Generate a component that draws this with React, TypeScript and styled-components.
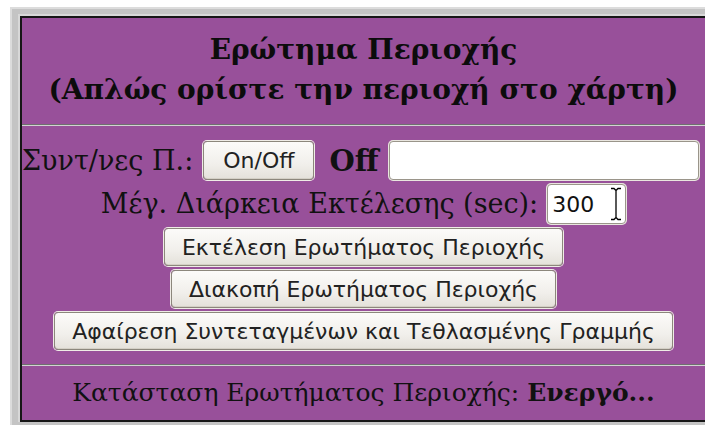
import React from "react";
import styled, { createGlobalStyle } from "styled-components";

const GlobalStyle = createGlobalStyle`
  html, body {
    margin: 0;
    padding: 0;
    background: #ffffff;
    overflow: hidden;
  }
  body {
    font-family: "DejaVu Serif", "Liberation Serif", serif;
    color: #111;
  }
`;

const Page = styled.div`
  padding: 7px 0 0 10px;
`;

/* grey bevelled table border around the panel (right side runs off the edge) */
const Frame = styled.div`
  border-top: 2px solid #dcdcdc;
  border-left: 2px solid #dcdcdc;
  background: #c4c4c4;
  padding: 5px 0 3px 6px;
`;

const FrameInner = styled.div`
  border-top: 2px solid #d8d8d8;
  border-left: 2px solid #d8d8d8;
`;

const Panel = styled.div`
  background: #98509a;
  border: 2px solid #161616;
  border-right: none;
  width: 683px;
  display: flex;
  flex-direction: column;
`;

const Header = styled.h2`
  margin: 0;
  padding: 12px 0 14px;
  font-size: 28px;
  line-height: 40px;
  font-weight: bold;
  text-align: center;
  color: #0c0c0c;
`;

const Divider = styled.hr`
  margin: 0;
  height: 0;
  border: none;
  border-top: 1px solid #6f6f6f;
  border-bottom: 1px solid #d2d2d2;
`;

const Controls = styled.div`
  padding: 15px 0 14px;
  display: flex;
  flex-direction: column;
  align-items: center;
  gap: 4px;
`;

const Row = styled.div<{ $start?: boolean }>`
  display: flex;
  align-items: center;
  justify-content: ${(p) => (p.$start ? "flex-start" : "center")};
  align-self: stretch;
  font-size: 27px;
  white-space: nowrap;
`;

const Label = styled.span`
  font-size: 27px;
  line-height: 32px;
`;

const Strong = styled.b`
  font-size: 29px;
  margin: 0 10px 0 15px;
`;

const Button = styled.button`
  height: 38px;
  padding: 0 17px;
  font-family: "DejaVu Sans", "Liberation Sans", sans-serif;
  font-size: 22px;
  color: #222;
  background: linear-gradient(#fcfbf9, #f1efeb 60%, #e4e1da);
  border: 1px solid #8c877c;
  border-radius: 4px;
  box-shadow: 0 0 0 1px #efece6, inset 0 -1px 0 #d4d0c6;
  white-space: nowrap;
  cursor: pointer;
`;

const SmallButton = styled(Button)`
  margin-left: 10px;
  height: 39px;
  padding: 0 19px;
`;

const TextBox = styled.input<{ $w: number; $h: number }>`
  width: ${(p) => p.$w}px;
  height: ${(p) => p.$h}px;
  box-sizing: border-box;
  padding: 0 4px;
  font-family: "DejaVu Sans", "Liberation Sans", sans-serif;
  font-size: 22px;
  color: #111;
  background: #fff;
  border: 1px solid #9a958a;
  border-radius: 4px;
  box-shadow: 0 0 0 1px #e9e6df;
  outline: none;
`;

const CursorBox = styled.span`
  position: relative;
  display: inline-flex;
  margin-left: 9px;
`;

const IBeam = styled.svg`
  position: absolute;
  left: 63px;
  top: 3px;
  pointer-events: none;
`;

const Status = styled.div`
  padding: 12px 0 12px;
  text-align: center;
  font-size: 25px;
  line-height: 30px;
`;

export default function App() {
  return (
    <>
      <GlobalStyle />
      <Page>
        <Frame>
          <FrameInner>
            <Panel>
              <Header>
                Ερώτημα Περιοχής
                <br />
                (Απλώς ορίστε την περιοχή στο χάρτη)
              </Header>
              <Divider />
              <Controls>
                <Row $start>
                  <Label>Συντ/νες Π.:</Label>
                  <SmallButton>On/Off</SmallButton>
                  <Strong>Off</Strong>
                  <TextBox $w={310} $h={39} defaultValue="" />
                </Row>
                <Row>
                  <Label>Μέγ. Διάρκεια Εκτέλεσης (sec):</Label>
                  <CursorBox>
                    <TextBox $w={79} $h={40} defaultValue="300" />
                    <IBeam width="12" height="34" viewBox="0 0 12 34">
                      <path
                        d="M1 1.5h3l2 2 2-2h3M6 3.5v27M1 32.5h3l2-2 2 2h3"
                        fill="none"
                        stroke="#fff"
                        strokeWidth="3"
                      />
                      <path
                        d="M1 1.5h3l2 2 2-2h3M6 3.5v27M1 32.5h3l2-2 2 2h3"
                        fill="none"
                        stroke="#000"
                        strokeWidth="1.3"
                      />
                    </IBeam>
                  </CursorBox>
                </Row>
                <Row>
                  <Button>Εκτέλεση Ερωτήματος Περιοχής</Button>
                </Row>
                <Row>
                  <Button>Διακοπή Ερωτήματος Περιοχής</Button>
                </Row>
                <Row>
                  <Button>Αφαίρεση Συντεταγμένων και Τεθλασμένης Γραμμής</Button>
                </Row>
              </Controls>
              <Divider />
              <Status>
                Κατάσταση Ερωτήματος Περιοχής: <b>Ενεργό...</b>
              </Status>
            </Panel>
          </FrameInner>
        </Frame>
      </Page>
    </>
  );
}
